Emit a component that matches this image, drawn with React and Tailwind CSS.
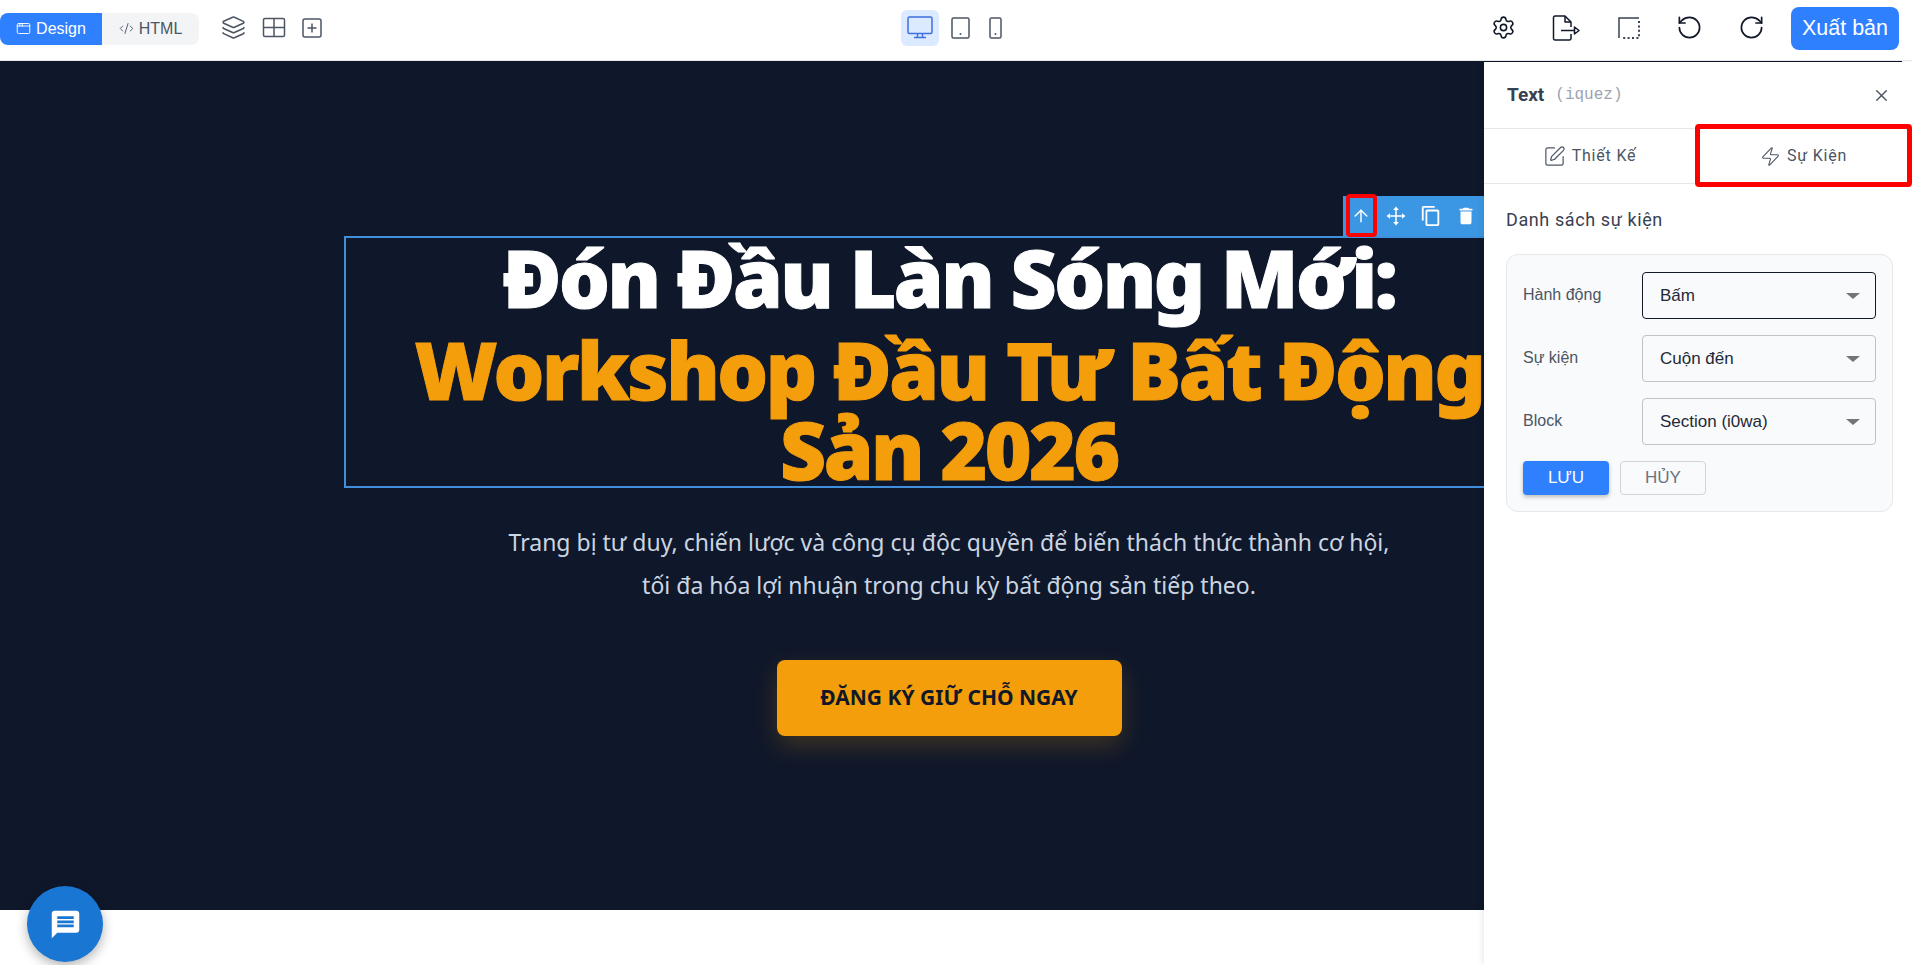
import React from 'react';
import { AppWindow, CodeXml, Layers, Settings, RotateCcw, RotateCw, SquarePen, Zap, X, ArrowUp } from 'lucide-react';
import { MdContentCopy, MdDelete, MdMessage } from 'react-icons/md';

const GridIcon = () => (
  <svg width="24" height="22" viewBox="0 0 24 22" fill="none" stroke="#4b5563" strokeWidth="1.5">
    <rect x="1.5" y="1.5" width="21" height="18" rx="1.5" />
    <path d="M12 1.5v18M1.5 10.5h21" />
  </svg>
);

const PlusBoxIcon = () => (
  <svg width="20" height="20" viewBox="0 0 20 20" fill="none" stroke="#4b5563" strokeWidth="1.5">
    <rect x="1" y="1" width="18" height="18" rx="2" />
    <path d="M10 5.5v9M5.5 10h9" />
  </svg>
);

const MonitorIcon = () => (
  <svg width="26" height="24" viewBox="0 0 26 24" fill="none" stroke="#3f6fe0" strokeWidth="1.5">
    <rect x="1" y="1" width="24" height="16.5" rx="1.5" />
    <path d="M10.5 17.5v3.5M15.5 17.5v3.5M7 21.5h12" />
  </svg>
);

const TabletIcon = ({ w }) => (
  <svg width={w} height="22" viewBox={`0 0 ${w} 22`} fill="none" stroke="#4b5563" strokeWidth="1.5">
    <rect x="1" y="1" width={w - 2} height="20" rx="1.5" />
    <circle cx={w / 2} cy="17" r="1" fill="#4b5563" stroke="none" />
  </svg>
);

const ExportIcon = () => (
  <svg width="28" height="26" viewBox="0 0 28 26" fill="none" stroke="#111827" strokeWidth="1.5" strokeLinejoin="round">
    <path d="M19 12V7l-6-6H3a1.5 1.5 0 0 0-1.5 1.5v21A1.5 1.5 0 0 0 3 25h14.5a1.5 1.5 0 0 0 1.5-1.5V19" />
    <path d="M13 1v6h6" />
    <path d="M9 15.5h14" />
    <path d="M22.5 12v7l4.5-3.5z" />
  </svg>
);

const CornerIcon = () => (
  <svg width="22" height="22" viewBox="0 0 22 22" fill="none" stroke="#374151" strokeWidth="1.5">
    <path d="M1 21V1h20" />
    <path d="M21 4v17H4" strokeDasharray="2 2.4" strokeWidth="2" />
  </svg>
);

const MoveIcon = () => (
  <svg width="20" height="20" viewBox="0 0 20 20" fill="white" stroke="white" strokeWidth="1.5">
    <path d="M10 3v14M3 10h14" />
    <path d="M10 0.5l2.8 3.5H7.2zM10 19.5l2.8-3.5H7.2zM0.5 10L4 7.2v5.6zM19.5 10L16 7.2v5.6z" stroke="none" />
  </svg>
);

const SelectBox = ({ value, focused }) => (
  <div className={`flex h-[47px] w-[234px] items-center justify-between rounded pl-[17px] pr-[15px] bg-[#f9fafb] border ${focused ? 'border-[#111827]' : 'border-[#bfc3c9]'}`}>
    <span className="text-[17px] text-[#1f2937]">{value}</span>
    <span className="h-0 w-0 border-x-[7px] border-t-[6px] border-x-transparent border-t-[#757575]" />
  </div>
);

const EventRow = ({ label, value, focused }) => (
  <div className="flex items-center">
    <span className="mt-[-1px] w-[119px] text-base text-[#4b5563]">{label}</span>
    <SelectBox value={value} focused={focused} />
  </div>
);

const App = () => {
  return (
    <div className="flex h-screen flex-col overflow-hidden bg-white font-['Liberation_Sans',sans-serif]">
      <header className="flex h-[61px] shrink-0 items-center border-b border-[#e5e7eb] bg-white pr-[13px]">
        <div className="mt-[-3px] flex h-8 w-[199px] rounded-lg bg-[#f3f4f6] text-base">
          <div className="flex w-[102px] items-center justify-center gap-[5px] rounded-l-lg bg-[#2f80ff] text-white">
            <AppWindow size={15} strokeWidth={1.5} />
            Design
          </div>
          <div className="flex flex-1 items-center justify-center gap-[5px] text-[#4b5563]">
            <CodeXml size={15} strokeWidth={1.5} />
            HTML
          </div>
        </div>
        <div className="ml-[22px] mt-[-5px] flex items-center gap-4">
          <Layers size={25} strokeWidth={1.5} className="text-[#4b5563]" />
          <GridIcon />
          <PlusBoxIcon />
        </div>
        <div className="ml-[579px] mt-[-5px] flex items-center">
          <div className="flex h-9 w-[38px] items-center justify-center rounded-md bg-[#dbeafe]">
            <MonitorIcon />
          </div>
          <div className="ml-3 flex"><TabletIcon w={19} /></div>
          <div className="ml-[19px] flex"><TabletIcon w={13} /></div>
        </div>
        <div className="ml-auto mt-[-5px] flex items-center">
          <Settings size={25} strokeWidth={1.5} className="text-[#111827]" />
          <div className="ml-[36px] flex"><ExportIcon /></div>
          <div className="ml-[38px] flex"><CornerIcon /></div>
          <RotateCcw size={27} strokeWidth={1.5} className="ml-[36px] text-[#111827]" />
          <RotateCw size={27} strokeWidth={1.5} className="ml-[35px] text-[#111827]" />
          <button className="ml-[26px] mt-[2px] h-[43px] w-[108px] rounded-lg bg-[#2f80ff] text-[21.5px] text-white">Xuất bản</button>
        </div>
      </header>

      <main className="relative flex-1 overflow-hidden bg-white">
        <section className="h-[849px] w-[1902px] bg-[#0f172a] pl-[344px] pt-[175px] font-['Noto_Sans',sans-serif]">
          <div className="w-[1210px] text-center">
            <div className="relative h-[252px] outline-2 -outline-offset-2 outline-[#3f8fdc]">
              <div className="absolute bottom-full right-0 flex h-10 w-[211px] items-center bg-[#3b97e3] text-white">
                <span className="flex w-[35px] justify-center"><ArrowUp size={20} strokeWidth={1.75} /></span>
                <span className="flex w-[35px] justify-center"><MoveIcon /></span>
                <span className="flex w-[35px] justify-center"><MdContentCopy size={22} /></span>
                <span className="flex w-[35px] justify-center"><MdDelete size={22} /></span>
                <span className="absolute -top-[2px] left-[3px] h-[43px] w-[31px] rounded-sm border-4 border-[#f00]" />
              </div>
              <h1 className="pt-px text-[80px] font-black leading-[80px] tracking-[-2.5px] text-white [-webkit-text-stroke:1px_currentColor]">
                <span className="mb-[12px] block">Đón Đầu Làn Sóng Mới:</span>
                <span className="block text-[#f59e0b]">Workshop Đầu Tư Bất Động Sản 2026</span>
              </h1>
            </div>
            <p className="mt-[33px] text-[23px] leading-[43px] text-[#cbd5e1]">
              Trang bị tư duy, chiến lược và công cụ độc quyền để biến thách thức thành cơ hội,
              <br />
              tối đa hóa lợi nhuận trong chu kỳ bất động sản tiếp theo.
            </p>
            <button className="mt-[53px] h-[76px] w-[345px] rounded-lg bg-[#f59e0b] text-[21px] font-bold text-[#111827] shadow-[0_10px_25px_rgba(245,158,11,0.2)]">
              ĐĂNG KÝ GIỮ CHỖ NGAY
            </button>
          </div>
        </section>

        <aside className="absolute bottom-0 right-0 top-px w-[428px] bg-white shadow-[-2px_0_6px_rgba(0,0,0,0.08)]">
          <div className="flex h-[67px] items-center justify-between border-b border-[#e5e7eb] pl-[23px] pr-[21px]">
            <div className="flex items-center gap-[11px]">
              <span className="font-['Roboto',sans-serif] text-[19px] font-bold text-[#374151]">Text</span>
              <span className="font-['Liberation_Mono',monospace] text-base text-[#9ca3af]">(iquez)</span>
            </div>
            <X size={19} strokeWidth={1.75} className="text-[#4b5563]" />
          </div>
          <div className="relative flex h-[55px] border-b border-[#e5e7eb] font-['Roboto',sans-serif] text-base tracking-[0.8px] text-[#4b5563]">
            <div className="flex w-[211px] items-center justify-center gap-[6px]">
              <SquarePen size={23} strokeWidth={1.25} />
              Thiết Kế
            </div>
            <div className="flex flex-1 items-center justify-center gap-[6px]">
              <Zap size={21} strokeWidth={1.25} />
              Sự Kiện
            </div>
            <span className="absolute -top-[5px] bottom-[-4px] left-[211px] right-0 rounded-sm border-[5px] border-[#f00]" />
          </div>
          <div className="pl-[22px] pr-[19px] pt-[24px]">
            <h3 className="font-['Roboto',sans-serif] text-lg leading-6 tracking-[0.6px] text-[#374151]">Danh sách sự kiện</h3>
            <div className="mt-[22px] h-[258px] rounded-xl border border-[#e5e7eb] bg-[#f9fafb] pl-4 pr-4 pt-[17px]">
              <div className="flex flex-col gap-4">
                <EventRow label="Hành động" value="Bấm" focused />
                <EventRow label="Sự kiện" value="Cuộn đến" />
                <EventRow label="Block" value="Section (i0wa)" />
              </div>
              <div className="mt-4 flex gap-[11px]">
                <button className="h-[34px] w-[86px] rounded bg-[#2f80ff] text-[17px] text-white shadow-[0_2px_4px_rgba(0,0,0,0.25)]">LƯU</button>
                <button className="h-[34px] w-[86px] rounded border border-[#d1d5db] text-[17px] text-[#6b7280]">HỦY</button>
              </div>
            </div>
          </div>
        </aside>

        <button className="absolute bottom-[3px] left-[27px] flex h-[76px] w-[76px] items-center justify-center rounded-full bg-[#1976d2] text-white shadow-[0_4px_12px_rgba(0,0,0,0.3)]">
          <MdMessage size={33} />
        </button>
      </main>
    </div>
  );
};

export default App;
